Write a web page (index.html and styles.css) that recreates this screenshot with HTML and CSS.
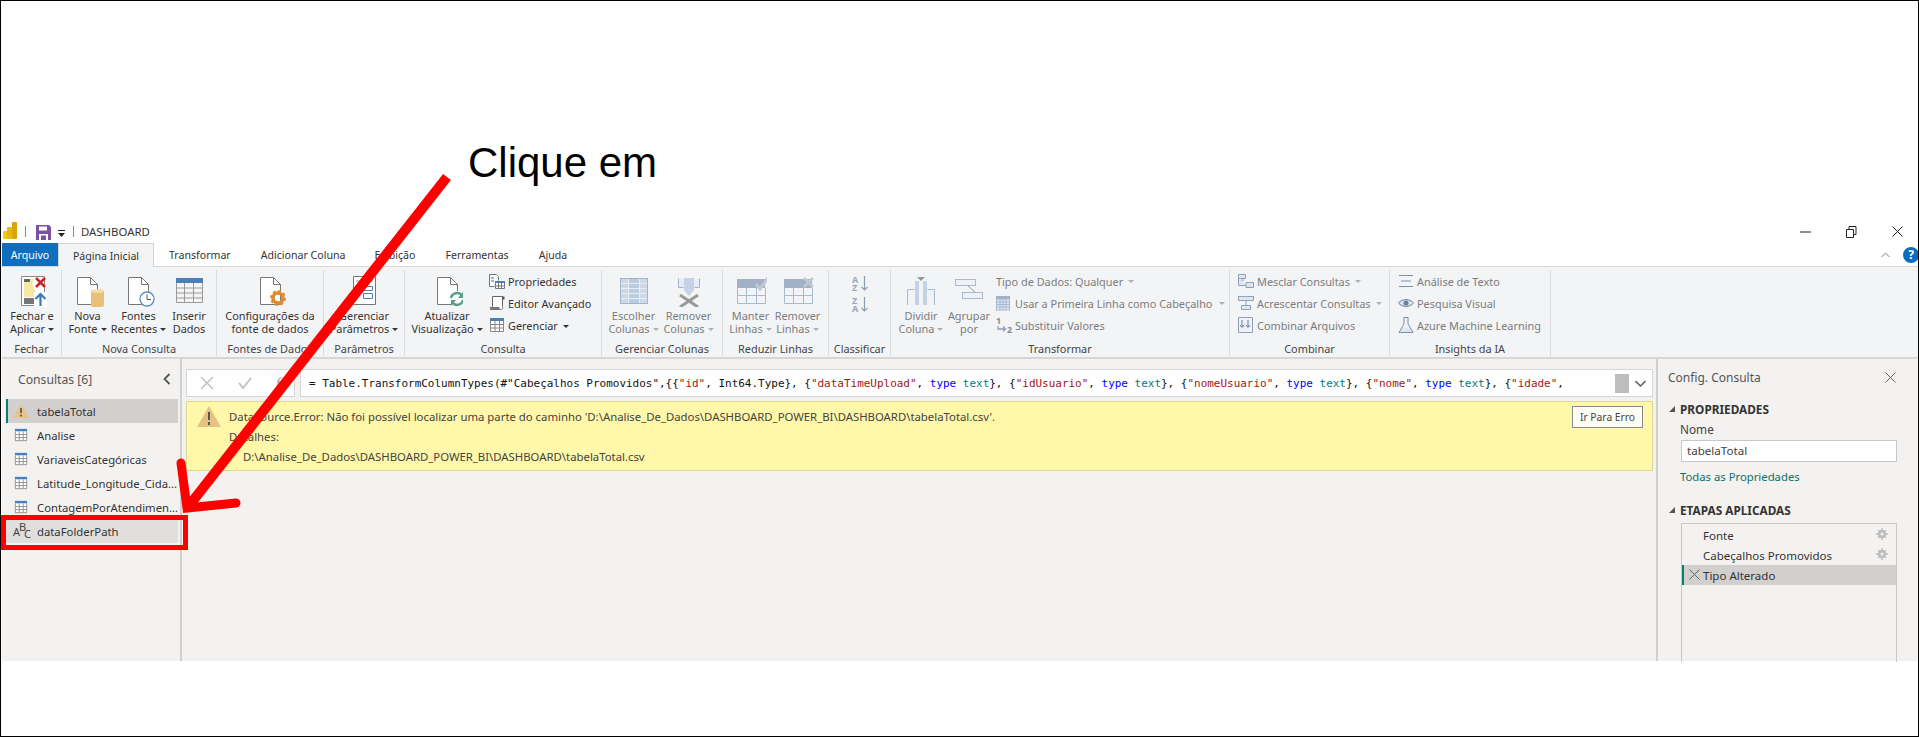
FILE: index.html
```html
<!DOCTYPE html>
<html lang="pt-BR">
<head>
<meta charset="utf-8">
<title>DASHBOARD</title>
<link rel="stylesheet" href="styles.css">
</head>
<body>
<div class="stage">
  <div class="app">
    <header class="titlebar">
      <svg class="ico logo" width="15" height="18" viewBox="0 0 15 18"><rect x="0" y="9" width="5" height="8" rx="1" fill="#f2c811"/><rect x="4" y="5" width="5" height="12" rx="1" fill="#e8b80e"/><rect x="9" y="0" width="5" height="17" rx="1" fill="#d9a50a"/></svg>
      <span class="tsep sep-a"></span>
      <svg class="ico save" width="15" height="15" viewBox="0 0 15 15"><path d="M0 0h13l2 2v13H0z" fill="#7f4fa5"/><rect x="3" y="1.500" width="8" height="4" fill="#fff"/><rect x="3" y="9" width="9" height="6" fill="#fff"/><rect x="5" y="10.500" width="5" height="4.500" fill="#7f4fa5"/></svg>
      <svg class="ico qat" width="7" height="7" viewBox="0 0 7 7"><rect x="0" y="0" width="7" height="1" fill="#222"/><path d="M0 3h7L3.500 7z" fill="#222"/></svg>
      <span class="tsep sep-b"></span>
      <span class="doc-title">DASHBOARD</span>
      <div class="winctl">
        <svg class="ico" width="11" height="11" viewBox="0 0 11 11"><path d="M0 6h11" stroke="#222" fill="none"/></svg>
        <svg class="ico" width="11" height="12" viewBox="0 0 11 12"><path d="M.5 3.500h7v8h-7zM3 3.500V.5h7v8H7.500" stroke="#222" fill="none"/></svg>
        <svg class="ico" width="11" height="11" viewBox="0 0 11 11"><path d="M.5.5l10 10M10.500.5l-10 10" stroke="#222" fill="none"/></svg>
      </div>
    </header>
    <nav class="tabs">
      <span class="tab tab-file">Arquivo</span>
      <span class="tab tab-active">Página Inicial</span>
      <span class="tab t1">Transformar</span>
      <span class="tab t2">Adicionar Coluna</span>
      <span class="tab t3">Exibição</span>
      <span class="tab t4">Ferramentas</span>
      <span class="tab t5">Ajuda</span>
      <div class="tab-right">
        <svg class="ico" width="9" height="6" viewBox="0 0 9 6"><path d="M.5 5l4-4 4 4" stroke="#888" fill="none"/></svg>
        <span class="help">?</span>
      </div>
    </nav>
    <section class="ribbon">
      <div class="group g1">
        <div class="gbody">
          <div class="big w60">
            <div class="bigico"><svg width="32" height="32" viewBox="0 0 32 32"><path d="M5.500 1.500h23v29h-23z" fill="#fff" stroke="#888"/><path d="M8 4h10l-2 5 4 8v5H8z" fill="#f7e9a4"/><rect x="8" y="4" width="6" height="3" fill="#666"/><rect x="8" y="23" width="10" height="6" fill="#777"/><path d="M20 3l9 9M29 3l-9 9" stroke="#c8252b" stroke-width="2.500" fill="none"/><rect x="18" y="17" width="13" height="15" fill="#fff"/><path d="M24.500 31V20M19.500 24l5-5 5 5" stroke="#3c7ab5" stroke-width="2.200" fill="none"/></svg></div>
            <span>Fechar e</span><span>Aplicar<i class="caret"></i></span>
          </div>
        </div>
        <div class="glabel">Fechar</div>
      </div>
      <div class="group g2">
        <div class="gbody">
          <div class="big w51">
            <div class="bigico"><svg width="32" height="32" viewBox="0 0 32 32"><path d="M5.500 2.500h13l7 7v20h-20z" fill="#fff" stroke="#777"/><path d="M18.500 2.500v7h7" fill="none" stroke="#777"/><rect x="19" y="15" width="13" height="17" rx="2" fill="#e8c07a"/><ellipse cx="25.500" cy="16" rx="6.500" ry="2" fill="#f4dca8"/></svg></div>
            <span>Nova</span><span>Fonte<i class="caret"></i></span>
          </div>
          <div class="big w51">
            <div class="bigico"><svg width="32" height="32" viewBox="0 0 32 32"><path d="M5.500 2.500h13l7 7v20h-20z" fill="#fff" stroke="#777"/><path d="M18.500 2.500v7h7" fill="none" stroke="#777"/><circle cx="24" cy="24" r="7" fill="#fff" stroke="#5a8fc0" stroke-width="1.300"/><path d="M24 19.500V24.500h4" fill="none" stroke="#555"/></svg></div>
            <span>Fontes</span><span>Recentes<i class="caret"></i></span>
          </div>
          <div class="big w50">
            <div class="bigico"><svg width="32" height="32" viewBox="0 0 32 32"><rect x="3" y="3" width="27" height="5" fill="#4a7fb8"/><path d="M3.500 8v19.500h26V8M3.500 13h26M3.500 18h26M3.500 23h26M11.500 8v19M20.500 8v19" fill="none" stroke="#9a9a9a"/></svg></div>
            <span>Inserir</span><span>Dados</span>
          </div>
        </div>
        <div class="glabel">Nova Consulta</div>
      </div>
      <div class="group g3">
        <div class="gbody gcenter">
          <div class="big">
            <div class="bigico"><svg width="32" height="32" viewBox="0 0 32 32"><path d="M6.500 2.500h13l7 7v20h-20z" fill="#fff" stroke="#777"/><path d="M19.500 2.500v7h7" fill="none" stroke="#777"/><circle cx="24" cy="23" r="5" fill="none" stroke="#e08a2e" stroke-width="3.500"/><circle cx="24" cy="23" r="7" fill="none" stroke="#e08a2e" stroke-width="2" stroke-dasharray="2.800 2.700"/></svg></div>
            <span>Configurações da</span><span>fonte de dados</span>
          </div>
        </div>
        <div class="glabel">Fontes de Dados</div>
      </div>
      <div class="group g4">
        <div class="gbody gcenter">
          <div class="big">
            <div class="bigico"><svg width="32" height="32" viewBox="0 0 32 32"><path d="M5.500 1.500h22v28h-22z" fill="#fff" stroke="#777"/><path d="M8 6h17M8 10h5" stroke="#999"/><path d="M15.500 11.500h9v4h-9zM15.500 18.500h9v5h-9z" fill="#fff" stroke="#4a7fb8"/></svg></div>
            <span>Gerenciar</span><span>Parâmetros<i class="caret"></i></span>
          </div>
        </div>
        <div class="glabel">Parâmetros</div>
      </div>
      <div class="group g5">
        <div class="gbody">
          <div class="big w84">
            <div class="bigico"><svg width="32" height="32" viewBox="0 0 32 32"><path d="M6.500 2.500h13l7 7v20h-20z" fill="#fff" stroke="#777"/><path d="M19.500 2.500v7h7" fill="none" stroke="#777"/><circle cx="26" cy="24" r="8" fill="#fff"/><path d="M20 23a6 6 0 0 1 11-2M32 25a6 6 0 0 1-11 2" fill="none" stroke="#5b9e86" stroke-width="2.500"/><path d="M32 17v6h-5zM20 31v-6h5z" fill="#5b9e86"/></svg></div>
            <span>Atualizar</span><span>Visualização<i class="caret"></i></span>
          </div>
          <div class="smallcol">
            <div class="small"><span class="sico"><svg width="16" height="16" viewBox="0 0 16 16"><path d="M.5 1.500h7l2 2v4M.5 1.500v12h5" fill="#fff" stroke="#777"/><path d="M2 5h3M2 8h3" stroke="#3c7ab5"/><rect x="6" y="8" width="10" height="2.500" fill="#4a7fb8"/><path d="M6.500 10v5.500h9V10M6.500 13h9M9.500 10v5M12.500 10v5" fill="#fff" stroke="#777"/></svg></span>Propriedades</div>
            <div class="small"><span class="sico"><svg width="16" height="16" viewBox="0 0 16 16"><path d="M3.500 1.500h10v10a2 2 0 0 1-2 3h-10c1.500-1 2-2 2-3z" fill="#fff" stroke="#666"/><path d="M.5 12h10v3H2z" fill="#777"/><path d="M13 1.500h2.500v3H13" fill="#555"/></svg></span>Editor Avançado</div>
            <div class="small"><span class="sico"><svg width="16" height="16" viewBox="0 0 16 16"><use href="#tbl"/></svg></span><span>Gerenciar<i class="caret cl"></i></span></div>
          </div>
        </div>
        <div class="glabel">Consulta</div>
      </div>
      <div class="group g6 dis">
        <div class="gbody">
          <div class="big w55">
            <div class="bigico"><svg width="32" height="32" viewBox="0 0 32 32"><rect x="2.500" y="3.500" width="27" height="25" fill="#cdd9ea" stroke="#a4b4cc"/><rect x="10" y="4" width="12" height="24" fill="#bccbe0"/><path d="M3 8.500h26M3 13.500h26M3 18.500h26M3 23.500h26M10.500 4v24M21.500 4v24" stroke="#e8edf4"/></svg></div>
            <span>Escolher</span><span>Colunas<i class="caret"></i></span>
          </div>
          <div class="big w55">
            <div class="bigico"><svg width="32" height="32" viewBox="0 0 32 32"><path d="M5.500 3.500v9h5M26.500 3.500v9h-5" fill="none" stroke="#a4b4cc"/><path d="M6 4h20v8H6z" fill="#e6ecf5"/><path d="M11 3h10v12l-5 6-5-6z" fill="#c5d2e6"/><path d="M7 20l18 12M25 20L7 32" stroke="#9a9a9a" stroke-width="3" fill="none"/></svg></div>
            <span>Remover</span><span>Colunas<i class="caret"></i></span>
          </div>
        </div>
        <div class="glabel">Gerenciar Colunas</div>
      </div>
      <div class="group g7 dis">
        <div class="gbody">
          <div class="big w47">
            <div class="bigico"><svg width="32" height="32" viewBox="0 0 32 32"><rect x="2" y="4" width="28" height="9" fill="#a3b1c6"/><path d="M21 9l4 5 8-11" fill="none" stroke="#c0c8d4" stroke-width="3"/><path d="M2.500 13v15.500h28V13M2.500 20.500h28M11.500 13v15M21.500 13v15" fill="none" stroke="#a9b9d2"/></svg></div>
            <span>Manter</span><span>Linhas<i class="caret"></i></span>
          </div>
          <div class="big w47">
            <div class="bigico"><svg width="32" height="32" viewBox="0 0 32 32"><rect x="2" y="4" width="28" height="9" fill="#a3b1c6"/><path d="M22 3l9 9M31 3l-9 9" fill="none" stroke="#c0c8d4" stroke-width="2.500"/><path d="M2.500 13v15.500h28V13M2.500 20.500h28M11.500 13v15M21.500 13v15" fill="none" stroke="#a9b9d2"/></svg></div>
            <span>Remover</span><span>Linhas<i class="caret"></i></span>
          </div>
        </div>
        <div class="glabel">Reduzir Linhas</div>
      </div>
      <div class="group g8 dis">
        <div class="gbody gsort">
          <svg class="ovf" width="16" height="17" viewBox="0 0 16 17"><text x="0" y="8" class="sorttxt">A</text><text x="0" y="16" class="sorttxt">Z</text><path d="M12.500 1v14M9.500 12l3 3 3-3" fill="none" stroke="#8e9bb0" stroke-width="1.200"/></svg>
          <svg class="ovf" width="16" height="17" viewBox="0 0 16 17"><text x="0" y="8" class="sorttxt">Z</text><text x="0" y="16" class="sorttxt">A</text><path d="M12.500 1v14M9.500 12l3 3 3-3" fill="none" stroke="#8e9bb0" stroke-width="1.200"/></svg>
        </div>
        <div class="glabel">Classificar</div>
      </div>
      <div class="group g9 dis">
        <div class="gbody">
          <div class="big w48">
            <div class="bigico"><svg width="32" height="32" viewBox="0 0 32 32"><path d="M2.500 30V14.500h7M29.500 30V14.500h-7" fill="#eef2f8" stroke="#a9b9d2"/><rect x="10" y="6" width="4" height="24" fill="#c5d2e6"/><rect x="18" y="6" width="4" height="24" fill="#c5d2e6"/><path d="M12 2h8l-4 4z" fill="#999"/></svg></div>
            <span>Dividir</span><span>Coluna<i class="caret"></i></span>
          </div>
          <div class="big w48">
            <div class="bigico"><svg width="32" height="32" viewBox="0 0 32 32"><rect x="2.500" y="4.500" width="20" height="6" fill="#eef2f8" stroke="#a9b9d2"/><rect x="9.500" y="17.500" width="20" height="6" fill="#eef2f8" stroke="#a9b9d2"/><path d="M15 11l7 6" stroke="#999" fill="none"/></svg></div>
            <span>Agrupar</span><span>por</span>
          </div>
          <div class="smallcol sc9">
            <div class="small">Tipo de Dados: Qualquer<i class="caret cl"></i></div>
            <div class="small"><span class="sico"><svg width="15" height="15" viewBox="0 0 15 15"><rect x="0" y="0" width="14" height="3" fill="#a3b1c6"/><rect x=".5" y="3" width="13" height="11" fill="#dfe6f0" stroke="#a9b9d2"/><path d="M1 6h12M1 8.500h12M1 11h12M4 3v11M7 3v11M10 3v11" stroke="#a9b9d2"/></svg></span>Usar a Primeira Linha como Cabeçalho<i class="caret cl2"></i></div>
            <div class="small"><span class="sico"><svg class="ovf" width="17" height="17" viewBox="0 0 17 17"><text x="0" y="7" class="reptxt">1</text><text x="11" y="16" class="reptxt">2</text><path d="M2 9v3h7M7 9.500l2.500 2.500L7 14.500" fill="none" stroke="#8fa0ba" stroke-width="1.300"/></svg></span>Substituir Valores</div>
          </div>
        </div>
        <div class="glabel">Transformar</div>
      </div>
      <div class="group g10 dis">
        <div class="gbody">
          <div class="smallcol">
            <div class="small"><span class="sico"><svg width="16" height="16" viewBox="0 0 16 16"><path d="M.5 1.500h7l0 4h-7zM8 9.500h7.500v5H8zM.5 5.500v7H8M3 7h3" fill="#dfe6f0" stroke="#8fa0ba"/></svg></span>Mesclar Consultas<i class="caret cl"></i></div>
            <div class="small"><span class="sico"><svg width="16" height="16" viewBox="0 0 16 16"><path d="M.5 1.500h15v4H.5zM3.500 10.500h9v4h-9zM8 6v4" fill="#dfe6f0" stroke="#8fa0ba"/></svg></span>Acrescentar Consultas<i class="caret cl"></i></div>
            <div class="small"><span class="sico"><svg width="16" height="16" viewBox="0 0 16 16"><path d="M.5.500h14v15H.5z" fill="#eef2f8" stroke="#8fa0ba"/><path d="M4 3v7M2 8l2 2.500L6 8M10 3v7M8 8l2 2.500L12 8" fill="none" stroke="#6d7f9a"/></svg></span>Combinar Arquivos</div>
          </div>
        </div>
        <div class="glabel">Combinar</div>
      </div>
      <div class="group g11 dis">
        <div class="gbody">
          <div class="smallcol">
            <div class="small"><span class="sico"><svg width="16" height="16" viewBox="0 0 16 16"><path d="M1 2.500h14M3 8h10M1 13.500h14" stroke="#7d8ea8" fill="none"/></svg></span>Análise de Texto</div>
            <div class="small"><span class="sico"><svg width="16" height="16" viewBox="0 0 16 16"><path d="M.5 8C4 3.500 12 3.500 15.500 8 12 12.500 4 12.500.5 8z" fill="#dfe6f0" stroke="#6d7f9a"/><circle cx="8" cy="8" r="2.500" fill="#6d7f9a"/></svg></span>Pesquisa Visual</div>
            <div class="small"><span class="sico"><svg width="16" height="16" viewBox="0 0 16 16"><path d="M3.500 11h9l2 4H1.500z" fill="#dfe6f0"/><path d="M5.500.5h5M6 1v6L1 15.500h14L10 7V1" fill="none" stroke="#7d8ea8"/></svg></span>Azure Machine Learning</div>
          </div>
        </div>
        <div class="glabel">Insights da IA</div>
      </div>
    </section>
    <main class="workspace">
      <aside class="queries">
        <div class="panel-head q-head">
          <span>Consultas [6]</span>
          <svg width="8" height="12" viewBox="0 0 8 12"><path d="M6.500 1L1.500 6l5 5" fill="none" stroke="#555" stroke-width="1.800"/></svg>
        </div>
        <ul class="qlist">
          <li class="q q-sel"><svg class="qico" width="16" height="14" viewBox="0 0 16 14"><path d="M8 0l8 14H0z" fill="#e8c48a"/><path d="M8 4v5M8 10.500v2" stroke="#444" stroke-width="1.500"/></svg><span class="qname">tabelaTotal</span></li>
          <li class="q"><svg class="qico" width="16" height="14" viewBox="0 0 16 16"><use href="#tbl"/></svg><span class="qname">Analise</span></li>
          <li class="q"><svg class="qico" width="16" height="14" viewBox="0 0 16 16"><use href="#tbl"/></svg><span class="qname">VariaveisCategóricas</span></li>
          <li class="q"><svg class="qico" width="16" height="14" viewBox="0 0 16 16"><use href="#tbl"/></svg><span class="qname">Latitude_Longitude_Cida...</span></li>
          <li class="q"><svg class="qico" width="16" height="14" viewBox="0 0 16 16"><use href="#tbl"/></svg><span class="qname">ContagemPorAtendimen...</span></li>
          <li class="q q-hover"><svg class="qico ovf" width="16" height="16" viewBox="0 0 16 16"><text x="0" y="13" class="abc">A</text><text x="6" y="8" class="abc">B</text><text x="11" y="15" class="abc">C</text></svg><span class="qname">dataFolderPath</span></li>
        </ul>
      </aside>
      <div class="center">
        <div class="formula">
          <div class="fx-box">
            <svg width="14" height="14" viewBox="0 0 14 14"><path d="M1 1l12 12M13 1L1 13" stroke="#c4c4c4" stroke-width="1.600" fill="none"/></svg>
            <svg width="14" height="12" viewBox="0 0 14 12"><path d="M1 6l4 5 8-10" stroke="#c4c4c4" stroke-width="2" fill="none"/></svg>
            <span class="fx">fx</span>
          </div>
          <div class="fx-input">
            <code class="fx-code">= Table.TransformColumnTypes(#"Cabeçalhos Promovidos",{{<b class="s">"id"</b>, Int64.Type}, {<b class="s">"dataTimeUpload"</b>, <b class="k">type</b> <b class="t">text</b>}, {<b class="s">"idUsuario"</b>, <b class="k">type</b> <b class="t">text</b>}, {<b class="s">"nomeUsuario"</b>, <b class="k">type</b> <b class="t">text</b>}, {<b class="s">"nome"</b>, <b class="k">type</b> <b class="t">text</b>}, {<b class="s">"idade"</b>,</code>
            <span class="fx-thumb"></span>
            <svg class="fx-more" width="11" height="7" viewBox="0 0 11 7"><path d="M.5 1l5 5 5-5" stroke="#666" stroke-width="1.600" fill="none"/></svg>
          </div>
        </div>
        <div class="errorbar">
          <svg class="err-ico" width="24" height="21" viewBox="0 0 24 21"><path d="M12 0l12 21H0z" fill="#e4c284"/><path d="M12 6v8M12 16v3" stroke="#555" stroke-width="2"/></svg>
          <div class="err-text">
            <p>DataSource.Error: Não foi possível localizar uma parte do caminho 'D:\Analise_De_Dados\DASHBOARD_POWER_BI\DASHBOARD\tabelaTotal.csv'.</p>
            <p>Detalhes:</p>
            <p class="err-path">D:\Analise_De_Dados\DASHBOARD_POWER_BI\DASHBOARD\tabelaTotal.csv</p>
          </div>
          <button class="err-btn">Ir Para Erro</button>
        </div>
      </div>
      <aside class="settings">
        <div class="panel-head s-head">
          <span>Config. Consulta</span>
          <svg width="11" height="11" viewBox="0 0 11 11"><path d="M.5.5l10 10M10.500.5l-10 10" stroke="#666" fill="none"/></svg>
        </div>
        <h3 class="sec"><i class="tri"></i>PROPRIEDADES</h3>
        <div class="field-label">Nome</div>
        <div class="field">tabelaTotal</div>
        <div class="link">Todas as Propriedades</div>
        <h3 class="sec sec2"><i class="tri"></i>ETAPAS APLICADAS</h3>
        <ul class="steps">
          <li class="step">Fonte<svg class="gear" width="12" height="12" viewBox="0 0 12 12"><circle cx="6" cy="6" r="3" fill="none" stroke="#bdbdbd" stroke-width="2.500"/><path d="M6 0v12M0 6h12M2 2l8 8M10 2l-8 8" stroke="#bdbdbd" stroke-width="1.500"/><circle cx="6" cy="6" r="1.500" fill="#f3f2f1"/></svg></li>
          <li class="step">Cabeçalhos Promovidos<svg class="gear" width="12" height="12" viewBox="0 0 12 12"><circle cx="6" cy="6" r="3" fill="none" stroke="#bdbdbd" stroke-width="2.500"/><path d="M6 0v12M0 6h12M2 2l8 8M10 2l-8 8" stroke="#bdbdbd" stroke-width="1.500"/><circle cx="6" cy="6" r="1.500" fill="#f3f2f1"/></svg></li>
          <li class="step step-sel"><svg class="step-x" width="11" height="11" viewBox="0 0 11 11"><path d="M.5.5l10 10M10.500.5l-10 10" stroke="#666" fill="none"/></svg>Tipo Alterado</li>
        </ul>
      </aside>
    </main>
  </div>
  <div class="caption">Clique em</div>
  <svg class="marks" width="1919" height="737" viewBox="0 0 1919 737">
    <rect x="3.500" y="517.500" width="182" height="30" fill="none" stroke="#f00" stroke-width="5"/>
    <path d="M447 177L188 507" stroke="#f00" stroke-width="10" fill="none"/>
    <path d="M181 463l6 45 49-5" stroke="#f00" stroke-width="9" stroke-linecap="round" stroke-linejoin="miter" fill="none"/>
  </svg>
</div>
<svg class="defs" width="0" height="0"><defs><g id="tbl"><rect x="1" y="1" width="14" height="3" fill="#4a7fb8"/><path d="M1.500 4v10.500h13V4M1.500 7.500h13M1.500 11h13M6 4v10M10.500 4v10" fill="#fff" stroke="#888"/></g></defs></svg>
</body>
</html>
```
FILE: styles.css
```css
* { box-sizing: border-box; }
html, body { margin: 0; padding: 0; }
body { width: 1919px; height: 737px; overflow: hidden; background: #fff; font-family: "Noto Sans", "Liberation Sans", sans-serif; font-size: 10.9px; color: #333; }
.stage { position: relative; width: 1919px; height: 737px; border: 1px solid #000; padding: 221px 0 0 1px; overflow: hidden; }
.app { width: 1916px; height: 439px; display: flex; flex-direction: column; }
.ico { display: block; flex: none; }
.ovf { overflow: visible; }
i { font-style: normal; }
b { font-weight: normal; }

.titlebar { height: 21px; padding-bottom: 2px; display: flex; align-items: center; flex: none; }
.logo { margin-left: 1px; margin-top: -1px; }
.tsep { width: 1px; height: 11px; background: #888; }
.sep-a { margin-left: 7px; }
.save { margin-left: 10px; margin-top: 2px; }
.qat { margin-left: 7px; margin-top: 4px; }
.sep-b { margin-left: 8px; }
.doc-title { margin-left: 7px; font-size: 11.4px; color: #333; }
.winctl { margin-left: auto; display: flex; align-items: center; gap: 35px; margin-right: 15px; }

.tabs { height: 23px; display: flex; align-items: stretch; position: relative; flex: none; font-size: 10.6px; }
.tab { display: flex; align-items: center; }
.tab-file { width: 56px; background: #106ebe; color: #fff; justify-content: center; }
.tab-active { width: 96px; justify-content: center; background: #f3f4f6; border: 1px solid #d4d4d4; border-bottom: 0; margin-bottom: -1px; position: relative; z-index: 1; }
.t1 { margin-left: 15px; }
.t2 { margin-left: 30px; }
.t3 { margin-left: 29px; }
.t4 { margin-left: 30px; }
.t5 { margin-left: 30px; }
.tab-right { margin-left: auto; display: flex; align-items: center; gap: 13px; }
.help { width: 16px; height: 16px; border-radius: 50%; background: #0f6cbd; color: #fff; font-weight: 700; font-size: 12px; display: flex; align-items: center; justify-content: center; margin-right: -1px; }

.ribbon { height: 93px; flex: none; display: flex; padding-top: 3px; background: #f3f4f6; border-top: 1px solid #d8d8d8; border-bottom: 2px solid #d6d6d6; }
.group { height: 86px; display: flex; flex-direction: column; border-right: 1px solid #dcdcdc; flex: none; }
.g1 { width: 60px; }
.g2 { width: 155px; }
.g3 { width: 107px; }
.g4 { width: 81px; }
.g5 { width: 197px; }
.g6 { width: 121px; padding-left: 4px; }
.g7 { width: 106px; padding-left: 4px; }
.g8 { width: 62px; }
.g9 { width: 339px; padding-left: 6px; }
.g10 { width: 160px; padding-left: 8px; }
.g11 { width: 161px; padding-left: 8px; }
.gbody { flex: 1; display: flex; min-height: 0; }
.gcenter { justify-content: center; }
.gsort { flex-direction: column; align-items: center; padding-top: 5px; gap: 4px; }
.glabel { height: 15px; line-height: 15px; text-align: center; color: #444; white-space: nowrap; }
.g6 .glabel, .g7 .glabel { margin-left: -4px; }
.g9 .glabel { margin-left: -6px; }
.g10 .glabel, .g11 .glabel { margin-left: -8px; }
.big { display: flex; flex-direction: column; align-items: center; line-height: 13px; white-space: nowrap; flex: none; }
.bigico { height: 39px; padding-top: 5px; }
.bigico svg { display: block; }
.w60 { width: 60px; }
.w51 { width: 51px; }
.w50 { width: 50px; }
.w84 { width: 84px; }
.w55 { width: 55px; }
.w47 { width: 47px; }
.w48 { width: 48px; }
.smallcol { display: flex; flex-direction: column; white-space: nowrap; flex: none; }
.small { height: 22px; display: flex; align-items: center; }
.sico { width: 19px; flex: none; display: flex; }
.sc9 { margin-left: 3px; }
.dis { color: #7c7c7c; }
.dis .glabel { color: #444; }
.caret { display: inline-block; width: 0; height: 0; margin-left: 3px; vertical-align: 2px; border: 3px solid transparent; border-top: 3px solid #333; border-bottom: 0; }
.dis .caret { border-top-color: #b0b0b0; }
.cl { margin-left: 5px; }
.cl2 { margin-left: 7px; }
.sorttxt { font: 700 9px "Noto Sans", sans-serif; fill: #9aa6b8; }
.reptxt { font: 700 9px "Noto Sans", sans-serif; fill: #8c8c8c; }

.workspace { flex: 1; min-height: 0; display: flex; background: #f3f2f1; }
.queries { width: 180px; flex: none; border-right: 2px solid #d2d0ce; padding-left: 4px; }
.panel-head { display: flex; justify-content: space-between; align-items: center; font-size: 12.2px; color: #555; height: 36px; }
.q-head { padding: 0 9px 0 12px; height: 40px; }
.qlist { list-style: none; margin: 0; padding: 0; width: 172px; }
.q { height: 24px; display: flex; align-items: center; font-size: 11.3px; color: #333; white-space: nowrap; padding-left: 7px; overflow: hidden; }
.q-sel { background: #d2d0ce; border-left: 2px solid #0f7b6c; padding-left: 5px; }
.q-hover { background: #e1dfdd; }
.qico { flex: none; }
.qname { margin-left: 8px; }
.abc { font: 400 11px "Noto Sans", sans-serif; fill: #444; }

.center { width: 1474px; flex: none; padding: 10px 3px 0 4px; }
.formula { height: 28px; display: flex; gap: 5px; }
.fx-box { width: 109px; background: #fff; border: 1px solid #d6d6d6; display: flex; align-items: center; padding-left: 13px; gap: 24px; }
.fx { font: italic 15px "Liberation Serif", serif; color: #999; }
.fx-input { flex: 1; background: #fff; border: 1px solid #d6d6d6; display: flex; align-items: center; padding-left: 8px; min-width: 0; }
.fx-code { font: 10.97px "DejaVu Sans Mono", monospace; white-space: pre; color: #111; }
.s { color: #a31515; }
.k { color: #0000ff; }
.t { color: #007a7a; }
.fx-thumb { width: 14px; height: 19px; background: #bdbdbd; margin-left: auto; }
.fx-more { margin: 0 6px 0 6px; }
.errorbar { margin-top: 4px; height: 70px; background: #fff7a9; border: 1px solid #dcd88c; display: flex; align-items: flex-start; padding: 4px 9px 0 10px; }
.err-ico { flex: none; }
.err-text { margin-left: 8px; padding-top: 1px; font-size: 11.35px; color: #444; flex: 1; }
.err-text p { margin: 0; height: 20px; line-height: 20px; white-space: nowrap; }
.err-path { padding-left: 14px; }
.err-btn { width: 71px; height: 22px; padding: 0; font: inherit; font-size: 10.3px; color: #444; background: #fffef4; border: 1px solid #888; }

.settings { flex: 1; min-width: 0; border-left: 2px solid #d2d0ce; padding-left: 10px; }
.s-head { height: 36px; padding-right: 22px; font-size: 12px; }
.sec { margin: 6px 0 0; height: 16px; font-size: 11.8px; font-weight: 700; color: #333; display: flex; align-items: center; line-height: 16px; }
.sec2 { margin-top: 17px; }
.tri { width: 0; height: 0; border-style: solid; border-width: 0 0 6px 6px; border-color: transparent transparent #555 transparent; margin-right: 5px; margin-left: 1px; flex: none; }
.field-label { margin-left: 12px; margin-top: 4px; height: 16px; line-height: 16px; font-size: 11.8px; color: #444; }
.field { margin: 3px 0 0 13px; width: 216px; height: 22px; line-height: 20px; padding-left: 5px; background: #fff; border: 1px solid #c8c8c8; font-size: 11.6px; color: #444; }
.link { margin: 7px 0 0 12px; height: 16px; line-height: 16px; font-size: 11.3px; color: #0e7063; }
.steps { list-style: none; margin: 5px 0 0 13px; padding: 1px 0 0; width: 216px; height: 139px; border: 1px solid #c8c8c8; border-bottom: 0; }
.step { height: 20px; display: flex; align-items: center; padding-left: 21px; font-size: 11.5px; color: #333; position: relative; }
.gear { position: absolute; right: 8px; top: 3px; }
.step-sel { background: #d2d0ce; box-shadow: inset 2px 0 0 #0f7b6c; }
.step-x { position: absolute; left: 7px; top: 4px; }

.caption { position: absolute; left: 467px; top: 139px; font: 42px/46px "Liberation Sans", sans-serif; color: #000; }
.marks { position: absolute; left: -1px; top: -1px; pointer-events: none; }
.defs { position: absolute; }
```
